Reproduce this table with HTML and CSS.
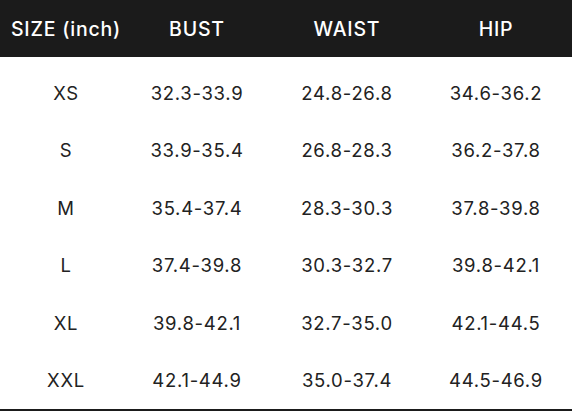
FILE: index.html
```html
<!DOCTYPE html>
<html>
<head>
<meta charset="utf-8">
<link rel="stylesheet" href="styles.css">
</head>
<body>
<div class="chart">
  <div class="row head">
    <div class="cell">SIZE (inch)</div>
    <div class="cell">BUST</div>
    <div class="cell">WAIST</div>
    <div class="cell last">HIP</div>
  </div>
  <div class="body">
    <div class="row"><div class="cell">XS</div><div class="cell">32.3-33.9</div><div class="cell">24.8-26.8</div><div class="cell last">34.6-36.2</div></div>
    <div class="row"><div class="cell">S</div><div class="cell">33.9-35.4</div><div class="cell">26.8-28.3</div><div class="cell last">36.2-37.8</div></div>
    <div class="row"><div class="cell">M</div><div class="cell">35.4-37.4</div><div class="cell">28.3-30.3</div><div class="cell last">37.8-39.8</div></div>
    <div class="row"><div class="cell">L</div><div class="cell">37.4-39.8</div><div class="cell">30.3-32.7</div><div class="cell last">39.8-42.1</div></div>
    <div class="row"><div class="cell">XL</div><div class="cell">39.8-42.1</div><div class="cell">32.7-35.0</div><div class="cell last">42.1-44.5</div></div>
    <div class="row"><div class="cell">XXL</div><div class="cell">42.1-44.9</div><div class="cell">35.0-37.4</div><div class="cell last">44.5-46.9</div></div>
  </div>
</div>
</body>
</html>
```
FILE: styles.css
```css
html, body {
  margin: 0;
  padding: 0;
  background: #ffffff;
}
.chart {
  width: 572px;
  font-family: Inter, "Liberation Sans", sans-serif;
}
.row {
  display: grid;
  grid-template-columns: 132px 130px 170px 140px;
  align-items: center;
}
.cell {
  text-align: center;
}
.cell.last {
  padding-right: 12px;
}
.head {
  background: #1b1b1b;
  color: #ffffff;
  height: 57px;
  font-size: 19.5px;
  font-weight: 500;
  letter-spacing: 0.8px;
}
.body {
  padding-top: 7px;
  border-bottom: 2px solid #1b1b1b;
}
.body .row {
  height: 57.5px;
  color: #222222;
  font-size: 18.5px;
  font-weight: 400;
  letter-spacing: 0.7px;
}
```
